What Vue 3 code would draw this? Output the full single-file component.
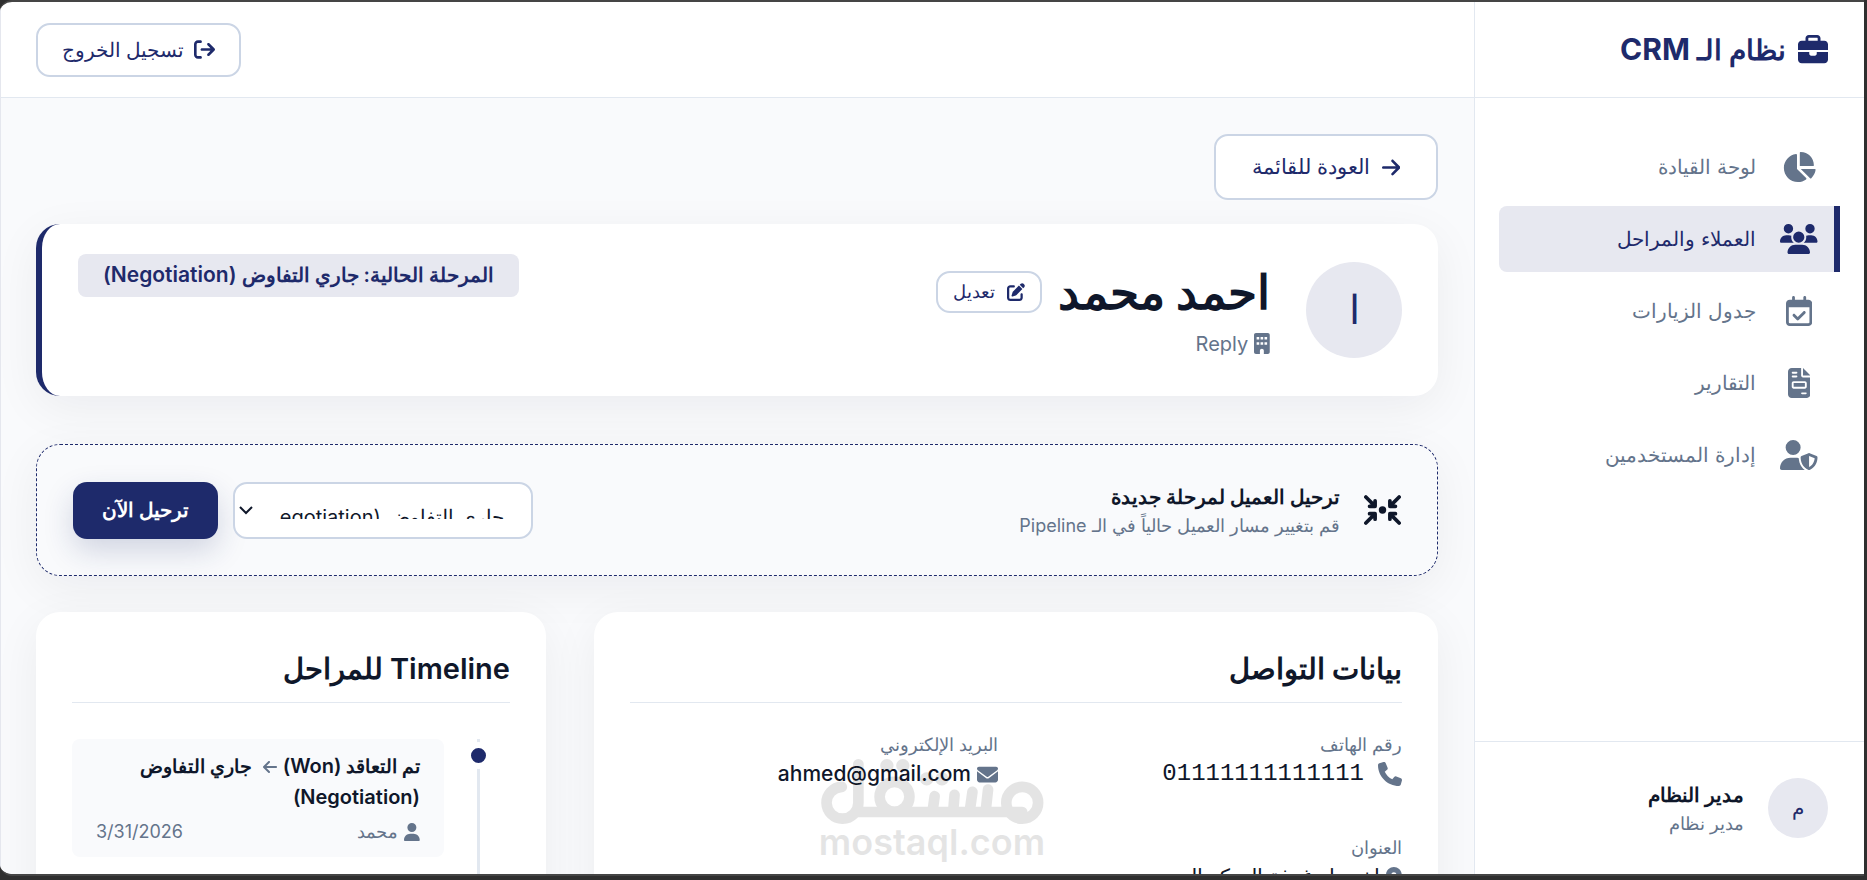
<script setup>
import { ref } from 'vue'

const icons = {
  briefcase: { box: '0 0 512 512', d: 'M184 48l144 0c4.4 0 8 3.6 8 8l0 40L176 96l0-40c0-4.4 3.6-8 8-8zm-56 8l0 40L64 96C28.7 96 0 124.7 0 160l0 96 192 0 128 0 192 0 0-96c0-35.3-28.7-64-64-64l-64 0 0-40c0-30.9-25.1-56-56-56L184 0c-30.9 0-56 25.1-56 56zM512 288l-192 0 0 32c0 17.7-14.3 32-32 32l-64 0c-17.7 0-32-14.3-32-32l0-32L0 288 0 416c0 35.3 28.7 64 64 64l384 0c35.3 0 64-28.7 64-64l0-128z' },
  pie: { box: '0 0 576 512', d: 'M304 240l0-223.4c0-9 7-16.6 16-16.6C443.7 0 544 100.3 544 224c0 9-7.6 16-16.6 16L304 240zM32 272C32 150.7 122.1 50.3 239 34.3c9.2-1.3 17 6.1 17 15.4L256 288 412.5 444.5c6.7 6.7 6.2 17.7-1.5 23.1C371.8 495.6 323.8 512 272 512C139.5 512 32 404.6 32 272zm526.4 16c9.3 0 16.6 7.8 15.4 17c-7.7 55.9-34.6 105.6-73.9 142.3c-6 5.6-15.4 5.2-21.2-.7L320 288l238.4 0z' },
  users: { box: '0 0 640 512', d: 'M144 0a80 80 0 1 1 0 160A80 80 0 1 1 144 0zM512 0a80 80 0 1 1 0 160A80 80 0 1 1 512 0zM0 298.7C0 239.8 47.8 192 106.7 192l42.7 0c15.9 0 31 3.5 44.6 9.7c-1.3 7.2-1.9 14.7-1.9 22.3c0 38.2 16.8 72.5 43.3 96c-.2 0-.4 0-.7 0L21.3 320C9.6 320 0 310.4 0 298.7zM405.3 320c-.2 0-.4 0-.7 0c26.6-23.5 43.3-57.8 43.3-96c0-7.6-.7-15-1.9-22.3c13.6-6.3 28.7-9.7 44.6-9.7l42.7 0C592.2 192 640 239.8 640 298.7c0 11.8-9.6 21.3-21.3 21.3l-213.3 0zM224 224a96 96 0 1 1 192 0 96 96 0 1 1 -192 0zM128 485.3C128 411.7 187.7 352 261.3 352l117.3 0C452.3 352 512 411.7 512 485.3c0 14.7-11.9 26.7-26.7 26.7l-330.7 0c-14.7 0-26.7-11.9-26.7-26.7z' },
  calendar: { box: '0 0 448 512', d: 'M128 0c13.3 0 24 10.7 24 24l0 40 144 0 0-40c0-13.3 10.7-24 24-24s24 10.7 24 24l0 40 40 0c35.3 0 64 28.7 64 64l0 16 0 48 0 256c0 35.3-28.7 64-64 64L64 512c-35.3 0-64-28.7-64-64L0 192l0-48 0-16C0 92.7 28.7 64 64 64l40 0 0-40c0-13.3 10.7-24 24-24zM400 192L48 192l0 256c0 8.8 7.2 16 16 16l320 0c8.8 0 16-7.2 16-16l0-256zM329 297L217 409c-9.4 9.4-24.6 9.4-33.9 0l-64-64c-9.4-9.4-9.4-24.6 0-33.9s24.6-9.4 33.9 0l47 47 95-95c9.4-9.4 24.6-9.4 33.9 0s9.4 24.6 0 33.9z' },
  invoice: { box: '0 0 384 512', d: 'M64 0C28.7 0 0 28.7 0 64L0 448c0 35.3 28.7 64 64 64l256 0c35.3 0 64-28.7 64-64l0-288-128 0c-17.7 0-32-14.3-32-32L224 0 64 0zM256 0l0 128 128 0L256 0zM80 64l64 0c8.8 0 16 7.2 16 16s-7.2 16-16 16L80 96c-8.8 0-16-7.2-16-16s7.2-16 16-16zm0 64l64 0c8.8 0 16 7.2 16 16s-7.2 16-16 16l-64 0c-8.8 0-16-7.2-16-16s7.2-16 16-16zm16 96l192 0c17.7 0 32 14.3 32 32l0 64c0 17.7-14.3 32-32 32L96 352c-17.7 0-32-14.3-32-32l0-64c0-17.7 14.3-32 32-32zm0 32l0 64 192 0 0-64L96 256zM240 416l64 0c8.8 0 16 7.2 16 16s-7.2 16-16 16l-64 0c-8.8 0-16-7.2-16-16s7.2-16 16-16z' },
  shield: { box: '0 0 640 512', d: 'M224 256A128 128 0 1 0 224 0a128 128 0 1 0 0 256zm-45.7 48C79.8 304 0 383.8 0 482.3C0 498.7 13.3 512 29.7 512l388.6 0c1.8 0 3.5-.2 5.3-.5c-76.3-55.1-99.8-141-103.1-200.2c-16.1-4.8-33.1-7.3-50.7-7.3l-91.4 0zm308.8-78.3l-120 48C358 277.4 352 286.2 352 296c0 63.3 25.9 168.8 134.8 214.2c5.9 2.5 12.6 2.5 18.5 0C614.1 464.8 640 359.3 640 296c0-9.8-6-18.6-15.1-22.3l-120-48c-5.7-2.3-12.1-2.3-17.8 0zM591.4 312c-3.9 50.7-27.2 116.7-95.4 149.7l0-187.8L591.4 312z' },
  logout: { box: '0 0 512 512', d: 'M502.6 278.6c12.5-12.5 12.5-32.8 0-45.3l-128-128c-12.5-12.5-32.8-12.5-45.3 0s-12.5 32.8 0 45.3L402.7 224 192 224c-17.7 0-32 14.3-32 32s14.3 32 32 32l210.7 0-73.4 73.4c-12.5 12.5-12.5 32.8 0 45.3s32.8 12.5 45.3 0l128-128zM160 96c17.7 0 32-14.3 32-32s-14.3-32-32-32L96 32C43 32 0 75 0 128L0 384c0 53 43 96 96 96l64 0c17.7 0 32-14.3 32-32s-14.3-32-32-32l-64 0c-17.7 0-32-14.3-32-32l0-256c0-17.7 14.3-32 32-32l64 0z' },
  right: { box: '0 0 448 512', d: 'M438.6 278.6c12.5-12.5 12.5-32.8 0-45.3l-160-160c-12.5-12.5-32.8-12.5-45.3 0s-12.5 32.8 0 45.3L338.8 224 32 224c-17.7 0-32 14.3-32 32s14.3 32 32 32l306.7 0L233.4 393.4c-12.5 12.5-12.5 32.8 0 45.3s32.8 12.5 45.3 0l160-160z' },
  left: { box: '0 0 448 512', d: 'M9.4 233.4c-12.5 12.5-12.5 32.8 0 45.3l160 160c12.5 12.5 32.8 12.5 45.3 0s12.5-32.8 0-45.3L109.2 288 416 288c17.7 0 32-14.3 32-32s-14.3-32-32-32l-306.7 0L214.6 118.6c12.5-12.5 12.5-32.8 0-45.3s-32.8-12.5-45.3 0l-160 160z' },
  edit: { box: '0 0 512 512', d: 'M471.6 21.7c-21.9-21.9-57.3-21.9-79.2 0L362.3 51.7l97.9 97.9 30.1-30.1c21.9-21.9 21.9-57.3 0-79.2L471.6 21.7zm-299.2 220c-6.1 6.1-10.8 13.6-13.5 21.9l-29.6 88.8c-2.9 8.6-.6 18.1 5.8 24.6s15.9 8.7 24.6 5.8l88.8-29.6c8.2-2.7 15.7-7.4 21.9-13.5L437.7 172.3 339.7 74.3 172.4 241.7zM96 64C43 64 0 107 0 160L0 416c0 53 43 96 96 96l256 0c53 0 96-43 96-96l0-96c0-17.7-14.3-32-32-32s-32 14.3-32 32l0 96c0 17.7-14.3 32-32 32L96 448c-17.7 0-32-14.3-32-32l0-256c0-17.7 14.3-32 32-32l96 0c17.7 0 32-14.3 32-32s-14.3-32-32-32L96 64z' },
  building: { box: '0 0 384 512', d: 'M48 0C21.5 0 0 21.5 0 48L0 464c0 26.5 21.5 48 48 48l96 0 0-80c0-26.5 21.5-48 48-48s48 21.5 48 48l0 80 96 0c26.5 0 48-21.5 48-48l0-416c0-26.5-21.5-48-48-48L48 0zM64 96h64v64h-64zM160 96h64v64h-64zM256 96h64v64h-64zM64 224h64v64h-64zM160 224h64v64h-64zM256 224h64v64h-64z' },
  phone: { box: '0 0 512 512', d: 'M164.9 24.6c-7.7-18.6-28-28.5-47.4-23.2l-88 24C12.1 30.2 0 46 0 64C0 311.4 200.6 512 448 512c18 0 33.8-12.1 38.6-29.5l24-88c5.3-19.4-4.6-39.7-23.2-47.4l-96-40c-16.3-6.8-35.2-2.1-46.3 11.6L304.7 368C234.3 334.7 177.3 277.7 144 207.3L193.3 167c13.7-11.2 18.4-30 11.6-46.3l-40-96z' },
  mail: { box: '0 0 512 512', d: 'M48 64C21.5 64 0 85.5 0 112c0 15.1 7.1 29.3 19.2 38.4L236.8 313.6c11.4 8.5 27 8.5 38.4 0L492.8 150.4c12.1-9.1 19.2-23.3 19.2-38.4c0-26.5-21.5-48-48-48L48 64zM0 176L0 384c0 35.3 28.7 64 64 64l384 0c35.3 0 64-28.7 64-64l0-208L294.4 339.2c-22.8 17.1-54 17.1-76.8 0L0 176z' },
  user: { box: '0 0 448 512', d: 'M224 256A128 128 0 1 0 224 0a128 128 0 1 0 0 256zm-45.7 48C79.8 304 0 383.8 0 482.3C0 498.7 13.3 512 29.7 512l388.6 0c16.4 0 29.7-13.3 29.7-29.7C448 383.8 368.2 304 269.7 304l-91.4 0z' },
  pin: { box: '0 0 384 512', d: 'M215.7 499.2C267 435 384 279.4 384 192C384 86 298 0 192 0S0 86 0 192c0 87.4 117 243 168.3 307.2c12.3 15.3 35.1 15.3 47.4 0zM192 128a64 64 0 1 1 0 128 64 64 0 1 1 0-128z' }
}

const nav = [
  { label: 'لوحة القيادة', icon: 'pie' },
  { label: 'العملاء والمراحل', icon: 'users', active: true },
  { label: 'جدول الزيارات', icon: 'calendar' },
  { label: 'التقارير', icon: 'invoice' },
  { label: 'إدارة المستخدمين', icon: 'shield' }
]

const stages = ['جاري التفاوض (Negotiation)', 'تم التعاقد (Won)']
const stage = ref(stages[0])
</script>

<template>
  <div class="window" dir="rtl" lang="ar">
    <aside class="sidebar">
      <div class="brand">
        <svg class="ic ic-30" :viewBox="icons.briefcase.box"><path :d="icons.briefcase.d" /></svg>
        <span>نظام الـ <b>CRM</b></span>
      </div>
      <nav class="nav">
        <a v-for="n in nav" :key="n.label" href="#" class="nav-item" :class="{ active: n.active }">
          <span class="nav-icon"><svg class="ic ic-30" :viewBox="icons[n.icon].box"><path :d="icons[n.icon].d" /></svg></span>
          <span>{{ n.label }}</span>
        </a>
      </nav>
      <div class="account">
        <div class="avatar avatar-sm">م</div>
        <div>
          <div class="account-name">مدير النظام</div>
          <div class="account-role">مدير نظام</div>
        </div>
      </div>
    </aside>

    <main class="main">
      <header class="topbar">
        <button type="button" class="btn btn-logout">
          <svg class="ic ic-21" :viewBox="icons.logout.box"><path :d="icons.logout.d" /></svg>
          <span>تسجيل الخروج</span>
        </button>
      </header>

      <div class="content">
        <a href="#" class="btn btn-back">
          <svg class="ic ic-21" :viewBox="icons.right.box"><path :d="icons.right.d" /></svg>
          <span>العودة للقائمة</span>
        </a>

        <section class="card profile">
          <div class="avatar avatar-lg">ا</div>
          <div class="profile-info">
            <div class="profile-title">
              <h1>احمد محمد</h1>
              <button type="button" class="btn btn-edit">
                <svg class="ic ic-18" :viewBox="icons.edit.box"><path :d="icons.edit.d" /></svg>
                <span>تعديل</span>
              </button>
            </div>
            <div class="company">
              <svg class="ic ic-21" :viewBox="icons.building.box"><path fill-rule="evenodd" :d="icons.building.d" /></svg>
              <span>Reply</span>
            </div>
          </div>
          <span class="badge">المرحلة الحالية: جاري التفاوض <bdi>(Negotiation)</bdi></span>
        </section>

        <section class="card transfer">
          <svg class="transfer-icon" viewBox="0 0 640 512">
            <g v-for="t in ['', 'translate(640 0) scale(-1 1)', 'translate(0 512) scale(1 -1)', 'translate(640 512) scale(-1 -1)']" :key="t" :transform="t">
              <path d="M32 32L176 176M192 96V192H96" />
            </g>
            <circle cx="320" cy="256" r="64" />
          </svg>
          <div class="transfer-text">
            <h2>ترحيل العميل لمرحلة جديدة</h2>
            <p>قم بتغيير مسار العميل حالياً في الـ Pipeline</p>
          </div>
          <div class="select-wrap">
            <select v-model="stage" aria-label="المرحلة الجديدة">
              <option v-for="s in stages" :key="s">{{ s }}</option>
            </select>
            <svg class="chevron" viewBox="0 0 14 9"><path d="M1 1L7 7L13 1" /></svg>
          </div>
          <button type="button" class="btn-primary">ترحيل الآن</button>
        </section>

        <div class="columns">
          <section class="card panel">
            <h3>بيانات التواصل</h3>
            <dl class="fields">
              <div>
                <dt>رقم الهاتف</dt>
                <dd class="phone">
                  <svg class="ic ic-24" :viewBox="icons.phone.box"><path :d="icons.phone.d" /></svg>
                  <span>01111111111111</span>
                </dd>
              </div>
              <div>
                <dt>البريد الإلكتروني</dt>
                <dd>
                  <svg class="ic ic-21" :viewBox="icons.mail.box"><path :d="icons.mail.d" /></svg>
                  <span>ahmed@gmail.com</span>
                </dd>
              </div>
              <div>
                <dt>العنوان</dt>
                <dd>
                  <svg class="ic ic-21" :viewBox="icons.pin.box"><path fill-rule="evenodd" :d="icons.pin.d" /></svg>
                  <span>اخر دار غرفة السكر ال</span>
                </dd>
              </div>
            </dl>
          </section>

          <section class="card panel">
            <h3>Timeline للمراحل</h3>
            <ol class="timeline">
              <li>
                <div class="rail"><span class="dot"></span></div>
                <article class="event">
                  <div class="event-title">
                    تم التعاقد <bdi>(Won)</bdi>
                    <svg class="ic ic-16" :viewBox="icons.left.box"><path :d="icons.left.d" /></svg>
                    جاري التفاوض <bdi>(Negotiation)</bdi>
                  </div>
                  <div class="event-meta">
                    <span class="event-user">
                      <svg class="ic ic-18" :viewBox="icons.user.box"><path :d="icons.user.d" /></svg>
                      <span>محمد</span>
                    </span>
                    <time>3/31/2026</time>
                  </div>
                </article>
              </li>
            </ol>
          </section>
        </div>
      </div>
    </main>

    <div class="watermark" dir="ltr">
      <svg viewBox="0 0 672 196">
        <g fill="none" stroke="#000" stroke-width="32" stroke-linecap="round">
          <path d="M64 84A48 48 0 1 0 114 132V16" />
          <path d="M114 160H608" />
          <circle cx="223" cy="114" r="45" />
          <path d="M344 112L338 156M404 108L400 156M458 99L450 156M505 92L498 156" />
          <circle cx="608" cy="132" r="48" />
        </g>
        <circle cx="200" cy="20" r="20" />
        <circle cx="248" cy="20" r="20" />
        <circle cx="320" cy="60" r="20" />
        <circle cx="366" cy="60" r="20" />
      </svg>
      <span>mostaql.com</span>
    </div>
  </div>
</template>

<style>
html {
  background: #2f2f2f;
}
</style>

<style scoped>
.window {
  --navy: #1e2a6b;
  --ink: #0f172a;
  --muted: #64748b;
  --line: #e2e8f0;
  --outline: #cbd5e5;
  --tint: #e7e8f0;
  position: relative;
  box-sizing: border-box;
  display: flex;
  height: calc(100vh - 4px);
  border-top: 2px solid #454545;
  border-bottom: 2px solid #454545;
  margin-right: 3px;
  border-radius: 12px 0 0 12px;
  overflow: hidden;
  background: #fff;
  color: var(--ink);
  font-family: Inter, sans-serif;
  font-size: 20px;
  line-height: 30px;
}
.window * {
  box-sizing: border-box;
}
h1, h2, h3, p, dl, dd, ol {
  margin: 0;
  padding: 0;
}
a {
  color: inherit;
  text-decoration: none;
}
button, select {
  font: inherit;
  color: inherit;
}
.ic {
  display: block;
  flex: none;
  width: auto;
  fill: currentColor;
}
.ic-30 { height: 30px; }
.ic-24 { height: 24px; }
.ic-21 { height: 21px; }
.ic-18 { height: 18px; }
.ic-16 { height: 16px; }

/* sidebar */
.sidebar {
  flex: none;
  display: flex;
  flex-direction: column;
  width: 390px;
  border-left: 1px solid var(--line);
}
.brand {
  display: flex;
  align-items: center;
  gap: 12px;
  height: 96px;
  padding: 0 36px;
  border-bottom: 1px solid var(--line);
  color: var(--navy);
  font-size: 28px;
  font-weight: 600;
}
.brand b {
  font-size: 30px;
  font-weight: 700;
}
.nav {
  flex: 1;
  display: flex;
  flex-direction: column;
  gap: 6px;
  padding: 36px 24px;
}
.nav-item {
  display: flex;
  align-items: center;
  gap: 24px;
  height: 66px;
  padding: 0 16px;
  border-right: 6px solid transparent;
  color: var(--muted);
}
.nav-item.active {
  background: var(--tint);
  border-right-color: var(--navy);
  border-radius: 8px 0 0 8px;
  color: var(--navy);
}
.nav-icon {
  display: flex;
  justify-content: center;
  width: 38px;
}
.account {
  display: flex;
  align-items: center;
  gap: 24px;
  padding: 36px;
  border-top: 1px solid var(--line);
}
.avatar {
  flex: none;
  display: flex;
  align-items: center;
  justify-content: center;
  border-radius: 50%;
  background: var(--tint);
  color: var(--navy);
  font-weight: 500;
}
.avatar-sm {
  width: 60px;
  height: 60px;
}
.avatar-lg {
  width: 96px;
  height: 96px;
  font-size: 40px;
}
.account-name {
  font-weight: 600;
}
.account-role {
  color: var(--muted);
  font-size: 18px;
  line-height: 27px;
}

/* main area */
.main {
  flex: 1;
  min-width: 0;
  display: flex;
  flex-direction: column;
  border-left: 1px solid #e5e7ee;
}
.topbar {
  flex: none;
  display: flex;
  align-items: center;
  justify-content: flex-end;
  height: 96px;
  padding: 0 36px 0 35px;
  border-bottom: 1px solid var(--line);
}
.content {
  flex: 1;
  min-height: 0;
  overflow: hidden;
  display: flex;
  flex-direction: column;
  padding: 36px 36px 0 35px;
  background: #f9fafc;
}
.content > * {
  flex: none;
}
.btn {
  display: inline-flex;
  align-items: center;
  gap: 12px;
  border: 2px solid var(--outline);
  border-radius: 14px;
  background: #fff;
  color: var(--navy);
  font-weight: 500;
}
.btn-logout {
  height: 54px;
  padding: 0 24px;
  gap: 10px;
}
.btn-back {
  align-self: flex-start;
  height: 66px;
  padding: 0 36px;
  font-size: 21px;
}
.btn-edit {
  height: 42px;
  padding: 0 15px;
  font-size: 18px;
}
.card {
  background: #fff;
  border-radius: 24px;
  box-shadow: 0 12px 48px rgba(15, 23, 42, 0.06);
}
.profile {
  display: flex;
  align-items: center;
  gap: 36px;
  margin-top: 24px;
  padding: 30px 36px;
  min-height: 172px;
  border-left: 6px solid var(--navy);
}
.profile-info {
  flex: 1;
}
.profile-title {
  display: flex;
  align-items: center;
  gap: 16px;
}
h1 {
  font-size: 47px;
  font-weight: 700;
  line-height: 60px;
}
.company {
  display: flex;
  align-items: center;
  gap: 6px;
  margin-top: 7px;
  color: var(--muted);
}
.badge {
  align-self: flex-start;
  padding: 6px 25px 7px;
  border-radius: 8px;
  background: var(--tint);
  color: var(--navy);
  font-weight: 600;
}
.badge bdi {
  font-size: 21px;
}
.transfer {
  display: flex;
  align-items: center;
  margin-top: 48px;
  padding: 36px;
  min-height: 132px;
  border: 1px dashed var(--navy);
  background: #f9fafc;
}
.transfer-icon {
  flex: none;
  width: 37px;
  height: 30px;
  margin-left: 24px;
  fill: var(--ink);
}
.transfer-icon path {
  fill: none;
  stroke: var(--ink);
  stroke-width: 64;
  stroke-linecap: round;
  stroke-linejoin: round;
}
.transfer-text {
  flex: 1;
}
h2 {
  font-size: 20px;
  font-weight: 600;
  line-height: 30px;
}
.transfer-text p {
  color: var(--muted);
  font-size: 18px;
  line-height: 27px;
}
.select-wrap {
  position: relative;
  width: 300px;
  margin-left: 15px;
}
select {
  display: block;
  width: 100%;
  height: 57px;
  padding: 18px 27px 18px 45px;
  border: 2px solid var(--outline);
  border-radius: 14px;
  background: #fff;
  color: var(--ink);
  appearance: none;
  font-size: 20px;
  font-weight: 400;
}
.chevron {
  position: absolute;
  left: 6px;
  top: 24px;
  width: 14px;
  height: 9px;
  fill: none;
  stroke: var(--ink);
  stroke-width: 2;
}
.btn-primary {
  height: 57px;
  padding: 0 29px;
  border: 0;
  border-radius: 14px;
  background: var(--navy);
  color: #fff;
  font-weight: 600;
  box-shadow: 0 12px 30px rgba(30, 42, 107, 0.18);
}
.columns {
  display: grid;
  grid-template-columns: 844fr 510fr;
  gap: 48px;
  margin-top: 36px;
}
.panel {
  min-height: 400px;
  padding: 36px;
}
h3 {
  padding-bottom: 12px;
  border-bottom: 1px solid var(--line);
  font-size: 29px;
  font-weight: 600;
  line-height: 42px;
}
.fields {
  display: grid;
  grid-template-columns: 1fr 1fr;
  gap: 44px 36px;
  margin-top: 28px;
}
dt {
  color: var(--muted);
  font-size: 18px;
  line-height: 27px;
}
dd {
  display: flex;
  align-items: center;
  gap: 6px;
  height: 32px;
  font-size: 21px;
  font-weight: 500;
}
dd .ic {
  color: var(--muted);
}
.phone {
  gap: 14px;
  font-family: "Liberation Mono", monospace;
  font-size: 24px;
  font-weight: 400;
}
.timeline {
  margin-top: 36px;
  list-style: none;
}
.timeline li {
  display: flex;
  gap: 3px;
}
.rail {
  position: relative;
  display: flex;
  justify-content: center;
  width: 63px;
  min-height: 200px;
  background: linear-gradient(var(--line), var(--line)) center / 3px 100% no-repeat;
}
.dot {
  width: 27px;
  height: 27px;
  margin-top: 3px;
  border: 6px solid #fff;
  border-radius: 50%;
  background: var(--navy);
}
.event {
  align-self: flex-start;
  flex: 1;
  padding: 12px 24px 10px;
  border-radius: 8px;
  background: #f9fafc;
}
.event-title {
  font-size: 19px;
  font-weight: 600;
}
.event-title bdi {
  font-size: 20px;
}
.event-title .ic {
  display: inline-block;
  vertical-align: -2px;
  margin: 0 6px;
  color: var(--muted);
}
.event-meta {
  display: flex;
  align-items: center;
  justify-content: space-between;
  margin-top: 4px;
  color: var(--muted);
  font-size: 18px;
}
.event-user {
  display: flex;
  align-items: center;
  gap: 6px;
}

/* overlay mark */
.watermark {
  position: absolute;
  left: 50%;
  bottom: 14px;
  display: flex;
  flex-direction: column;
  align-items: center;
  width: 224px;
  margin-left: -112px;
  opacity: 0.1;
  color: #000;
  font-size: 36px;
  font-weight: 600;
  line-height: 36px;
  pointer-events: none;
}
.watermark svg {
  width: 224px;
  height: 65px;
}
</style>
